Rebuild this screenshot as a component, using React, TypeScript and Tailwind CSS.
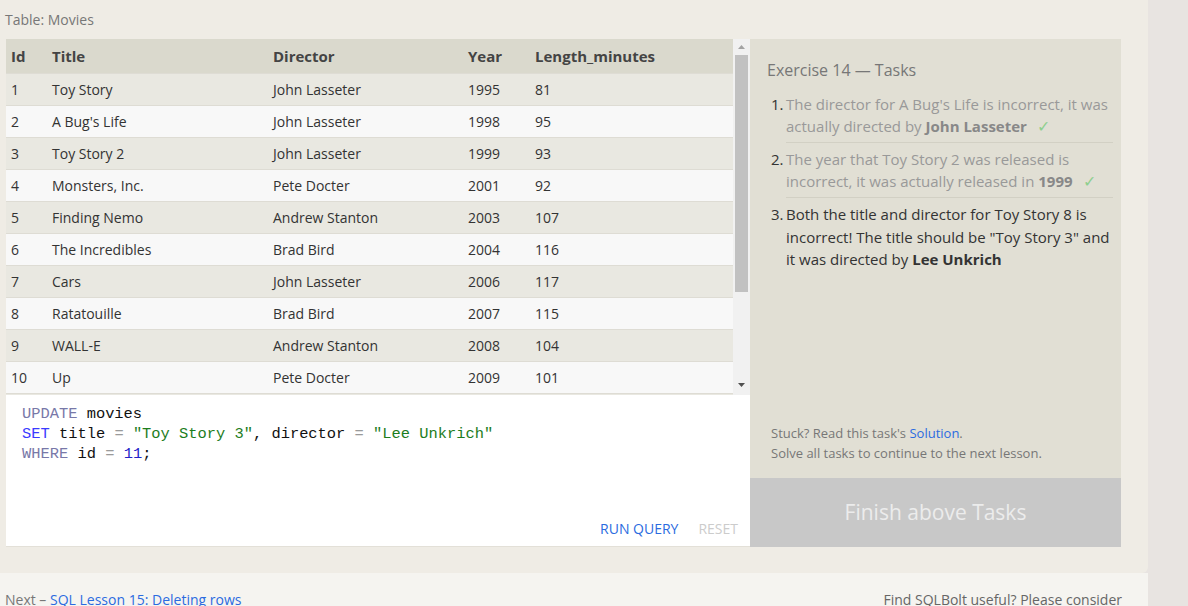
const movies = [
  { id: 1, title: "Toy Story", director: "John Lasseter", year: 1995, length: 81 },
  { id: 2, title: "A Bug's Life", director: "John Lasseter", year: 1998, length: 95 },
  { id: 3, title: "Toy Story 2", director: "John Lasseter", year: 1999, length: 93 },
  { id: 4, title: "Monsters, Inc.", director: "Pete Docter", year: 2001, length: 92 },
  { id: 5, title: "Finding Nemo", director: "Andrew Stanton", year: 2003, length: 107 },
  { id: 6, title: "The Incredibles", director: "Brad Bird", year: 2004, length: 116 },
  { id: 7, title: "Cars", director: "John Lasseter", year: 2006, length: 117 },
  { id: 8, title: "Ratatouille", director: "Brad Bird", year: 2007, length: 115 },
  { id: 9, title: "WALL-E", director: "Andrew Stanton", year: 2008, length: 104 },
  { id: 10, title: "Up", director: "Pete Docter", year: 2009, length: 101 },
  { id: 11, title: "Toy Story 8", director: "El Directore", year: 2010, length: 103 },
];

function Check() {
  return <span className="ml-[10px] text-[16px] text-[#8fcf8f]">✓</span>;
}

function MoviesTable() {
  return (
    <div className="flex h-[356px] bg-[#f8f8f8]">
      <div className="flex-1 overflow-hidden">
        <div className="grid grid-cols-[46px_221px_195px_67px_1fr] h-[34px] items-center bg-[#dad9cd] text-[15px] font-bold text-[#444]">
          <div className="pl-[5px]">Id</div>
          <div>Title</div>
          <div>Director</div>
          <div>Year</div>
          <div>Length_minutes</div>
        </div>
        {movies.map((m, i) => (
          <div
            key={m.id}
            className={`grid grid-cols-[46px_221px_195px_67px_1fr] h-[32px] items-center border-t border-[#dedcd4] text-[14px] text-[#333] ${
              i % 2 === 0 ? "bg-[#e9e8e1]" : "bg-[#f8f8f8]"
            }`}
          >
            <div className="pl-[5px]">{m.id}</div>
            <div>{m.title}</div>
            <div>{m.director}</div>
            <div>{m.year}</div>
            <div>{m.length}</div>
          </div>
        ))}
      </div>
      <div className="w-[17px] flex flex-col items-center bg-[#f1f1f1]">
        <div className="h-[16px] flex items-center justify-center">
          <svg width="7" height="4" viewBox="0 0 7 4">
            <path d="M0 4 L3.5 0 L7 4 Z" fill="#a3a3a3" />
          </svg>
        </div>
        <div className="w-[13px] h-[237px] bg-[#c1c1c1]" />
        <div className="flex-1" />
        <div className="h-[16px] flex items-center justify-center mb-[2px]">
          <svg width="7" height="4" viewBox="0 0 7 4">
            <path d="M0 0 L7 0 L3.5 4 Z" fill="#505050" />
          </svg>
        </div>
      </div>
    </div>
  );
}

function Editor() {
  return (
    <div className="h-[152px] bg-white border-b border-[#e3e0d8] flex flex-col">
      <pre className="pt-[9px] pl-[16px] text-[15.4px] leading-[20px] text-[#111] font-['Liberation_Mono',monospace]">
        <span className="text-[#7878a8]">UPDATE</span> movies{"\n"}
        <span className="text-[#3a3aff]">SET</span> title <span className="text-[#9a9a9a]">=</span>{" "}
        <span className="text-[#1d7d1d]">"Toy Story 3"</span>, director <span className="text-[#9a9a9a]">=</span>{" "}
        <span className="text-[#1d7d1d]">"Lee Unkrich"</span>{"\n"}
        <span className="text-[#7878a8]">WHERE</span> id <span className="text-[#9a9a9a]">=</span>{" "}
        <span className="text-[#2424c8]">11</span>;
      </pre>
      <div className="flex-1" />
      <div className="flex justify-end gap-[20px] pr-[12px] pb-[7px] text-[14px]">
        <span className="text-[#2b6be0]">RUN QUERY</span>
        <span className="text-[#cccccc]">RESET</span>
      </div>
    </div>
  );
}

function TaskPanel() {
  return (
    <div className="w-[371px] bg-[#e1dfd4] flex flex-col">
      <div className="pt-[20px] pl-[17px] pr-[8px] flex-1 flex flex-col">
        <h3 className="text-[16px] leading-[22px] text-[#777]">Exercise 14 — Tasks</h3>
        <ol className="mt-[12px] pl-[4px] text-[15px] leading-[22px]">
          <li className="flex">
            <span className="w-[15px] text-[#333]">1.</span>
            <div className="flex-1 pb-[5px] border-b border-[#d2d0c4] text-[#999]">
              The director for A Bug's Life is incorrect, it was actually directed by{" "}
              <b className="text-[#888]">John Lasseter</b>
              <Check />
            </div>
          </li>
          <li className="flex pt-[5px]">
            <span className="w-[15px] text-[#333]">2.</span>
            <div className="flex-1 pb-[5px] border-b border-[#d2d0c4] text-[#999]">
              The year that Toy Story 2 was released is incorrect, it was actually released in{" "}
              <b className="text-[#888]">1999</b>
              <Check />
            </div>
          </li>
          <li className="flex pt-[5px]">
            <span className="w-[15px] text-[#333]">3.</span>
            <div className="flex-1 text-[#333] leading-[22.5px]">
              Both the title and director for Toy Story 8 is incorrect! The title should be "Toy Story 3" and
              it was directed by <b>Lee Unkrich</b>
            </div>
          </li>
        </ol>
        <div className="flex-1" />
        <div className="pl-[4px] pb-[15px] text-[13px] leading-[20px] text-[#777]">
          <div>
            Stuck? Read this task's <span className="text-[#2b6be0]">Solution</span>.
          </div>
          <div>Solve all tasks to continue to the next lesson.</div>
        </div>
      </div>
      <div className="h-[69px] bg-[#c8c8c8] flex items-center justify-center text-[21px] text-[#ececec]">
        Finish above Tasks
      </div>
    </div>
  );
}

export default function App() {
  return (
    <div className="w-[1188px] h-[606px] flex overflow-hidden bg-[#e8e4e1] font-['Open_Sans',sans-serif]">
      <div className="w-[1148px] flex flex-col">
        <div className="bg-[#efece5] rounded-br-[6px] pl-[6px] pb-[26px]">
          <div className="h-[39px] pt-[10px] -ml-[1px] text-[14px] leading-[20px] text-[#777]">
            Table: Movies
          </div>
          <div className="flex">
            <div className="w-[744px] flex flex-col">
              <MoviesTable />
              <Editor />
            </div>
            <TaskPanel />
          </div>
        </div>
        <div className="flex-1 bg-[#f5f4f0] flex justify-between pl-[5px] pr-[26px] pt-[17px] text-[14px] leading-[20px]">
          <div className="text-[#777]">
            Next – <span className="text-[#2b6be0]">SQL Lesson 15: Deleting rows</span>
          </div>
          <div className="text-[#666]">Find SQLBolt useful? Please consider</div>
        </div>
      </div>
      <div className="flex-1" />
    </div>
  );
}
